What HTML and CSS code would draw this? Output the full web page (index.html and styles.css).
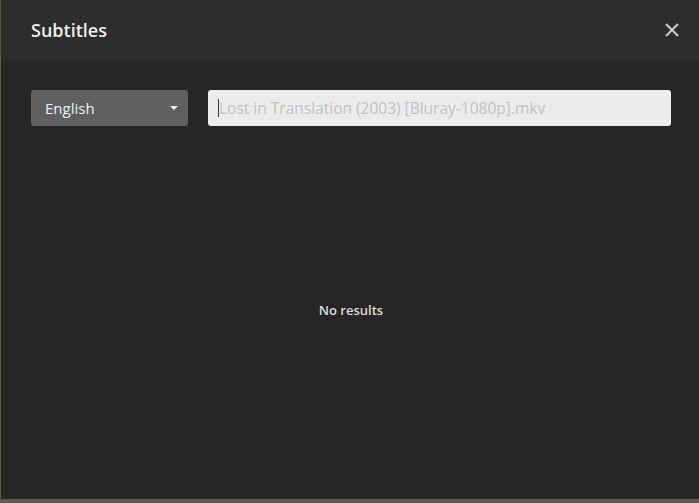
FILE: index.html
```html
<!DOCTYPE html>
<html>
  <head>
    <title>Subtitles</title>
    <link rel="stylesheet" href="styles.css">
  </head>
  <body>
    <div class="modal">
      <div class="modal-header">
        <h1>Subtitles</h1>
        <button class="close" title="Close">
          <svg width="14" height="14" viewBox="0 0 14 14"><path d="M1 1L13 13M13 1L1 13" stroke="#c8c8c8" stroke-width="2.2" fill="none"/></svg>
        </button>
      </div>
      <div class="modal-body">
        <div class="search-row">
          <div class="select">
            <span>English</span>
            <span class="caret"></span>
          </div>
          <div class="search">
            <span class="cursor"></span>
            <span class="placeholder">Lost in Translation (2003) [Bluray-1080p].mkv</span>
          </div>
        </div>
        <div class="empty">No results</div>
      </div>
    </div>
  </body>
</html>
```

FILE: styles.css
```css
html, body {
  margin: 0;
  height: 503px;
  overflow: hidden;
}
body {
  background: #5c5751;
  padding-left: 1px;
  font-family: "Open Sans", "Noto Sans", sans-serif;
  box-sizing: border-box;
}
.modal {
  height: 499px;
  background: #262626;
  display: flex;
  flex-direction: column;
}
.modal-header {
  height: 60px;
  background: #2d2d2d;
  display: flex;
  align-items: center;
  justify-content: space-between;
  padding: 0 20px 0 30px;
}
.modal-header h1 {
  margin: 0;
  color: #eeeeee;
  font-size: 18px;
  font-weight: 600;
}
.close {
  background: none;
  border: none;
  padding: 0;
  width: 14px;
  height: 14px;
  display: flex;
}
.modal-body {
  flex: 1;
  display: flex;
  flex-direction: column;
  padding: 30px 28px 0 30px;
}
.search-row {
  display: flex;
  gap: 20px;
  height: 36px;
}
.select {
  width: 157px;
  box-sizing: border-box;
  background: #5f5f5f;
  border-radius: 3px;
  display: flex;
  align-items: center;
  justify-content: space-between;
  padding: 0 10px 0 14px;
  color: #eeeeee;
  font-size: 15px;
}
.caret {
  width: 0;
  height: 0;
  border-left: 4px solid transparent;
  border-right: 4px solid transparent;
  border-top: 4px solid #eeeeee;
}
.search {
  flex: 1;
  background: #ececec;
  border-radius: 3px;
  display: flex;
  align-items: center;
  padding-left: 10px;
  font-size: 15.5px;
}
.cursor {
  width: 1px;
  height: 18px;
  background: #333;
}
.placeholder {
  color: #c2c2c2;
}
.empty {
  flex: 1;
  display: flex;
  align-items: center;
  justify-content: center;
  color: #dddddd;
  font-size: 13px;
  font-weight: 600;
  padding-bottom: 6px;
}
```
